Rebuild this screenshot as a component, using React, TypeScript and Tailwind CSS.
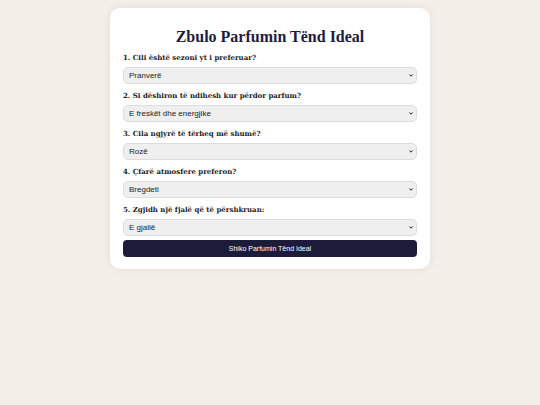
import { useState } from 'react';

const questions = [
  { label: '1. Cili është sezoni yt i preferuar?', options: ['Pranverë', 'Verë', 'Vjeshtë', 'Dimër'] },
  { label: '2. Si dëshiron të ndihesh kur përdor parfum?', options: ['E freskët dhe energjike', 'E qetë dhe e relaksuar', 'Elegante', 'Misterioze'] },
  { label: '3. Cila ngjyrë të tërheq më shumë?', options: ['Rozë', 'Blu', 'E zezë', 'E bardhë'] },
  { label: '4. Çfarë atmosfere preferon?', options: ['Bregdeti', 'Mali', 'Qyteti', 'Kopshti'] },
  { label: '5. Zgjidh një fjalë që të përshkruan:', options: ['E gjallë', 'E ëmbël', 'E fortë', 'Romantike'] },
];

export default function App() {
  const [answers, setAnswers] = useState<string[]>(questions.map((q) => q.options[0]));

  return (
    <div className="min-h-screen bg-[#f4f0e9] pt-2">
      <div className="mx-auto w-[320px] rounded-[10px] bg-white px-[13px] pt-[17px] pb-[12px] shadow-[0_0_10px_rgba(0,0,0,0.08)]">
        <h1 className="mb-[4px] h-[24px] text-center text-[16px] leading-[24px] font-bold text-[#1f1d3d] [font-family:'Liberation_Serif',Georgia,serif]">
          Zbulo Parfumin Tënd Ideal
        </h1>

        <div className="flex flex-col gap-[7px]">
          {questions.map((q, i) => (
            <div key={i} className="flex flex-col gap-[4px]">
              <label className="h-[10px] text-[7px] leading-[10px] font-bold text-[#222] [font-family:'DejaVu_Serif',Georgia,serif]">
                {q.label}
              </label>
              <div className="relative h-[17px]">
                <select
                  value={answers[i]}
                  onChange={(e) => {
                    const next = [...answers];
                    next[i] = e.target.value;
                    setAnswers(next);
                  }}
                  className="block h-[17px] w-full appearance-none rounded-[5px] border border-[#dcdcdc] bg-[#efefef] px-[5px] text-[8px] leading-[15px] text-[#222] [font-family:'Liberation_Sans',Arial,sans-serif]"
                >
                  {q.options.map((o) => (
                    <option key={o}>{o}</option>
                  ))}
                </select>
                <svg
                  className="pointer-events-none absolute top-[7px] right-[4px] h-[3px] w-[4px]"
                  viewBox="0 0 4 3"
                >
                  <path d="M0.5 0.5 L2 2.2 L3.5 0.5" fill="none" stroke="#222" strokeWidth="1" />
                </svg>
              </div>
            </div>
          ))}
        </div>

        <button className="mt-[4px] block h-[17px] w-full rounded-[4px] bg-[#1e1b3a] text-[7px] leading-[17px] text-white [font-family:'Liberation_Sans',Arial,sans-serif]">
          Shiko Parfumin Tënd Ideal
        </button>
      </div>
    </div>
  );
}
